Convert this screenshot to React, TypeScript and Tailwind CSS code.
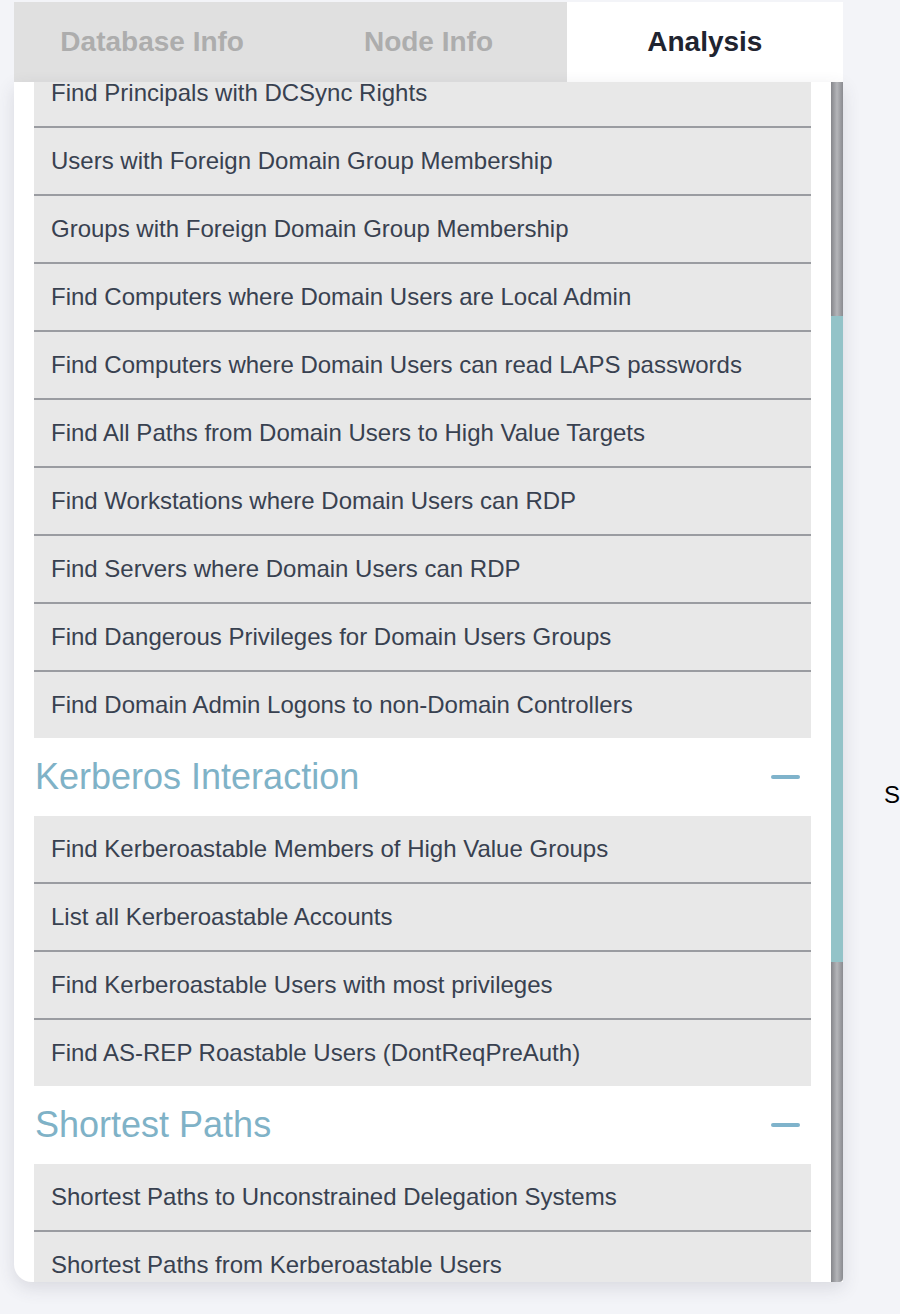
const groups = [
  {
    title: "",
    items: [
      "Find Principals with DCSync Rights",
      "Users with Foreign Domain Group Membership",
      "Groups with Foreign Domain Group Membership",
      "Find Computers where Domain Users are Local Admin",
      "Find Computers where Domain Users can read LAPS passwords",
      "Find All Paths from Domain Users to High Value Targets",
      "Find Workstations where Domain Users can RDP",
      "Find Servers where Domain Users can RDP",
      "Find Dangerous Privileges for Domain Users Groups",
      "Find Domain Admin Logons to non-Domain Controllers",
    ],
  },
  {
    title: "Kerberos Interaction",
    items: [
      "Find Kerberoastable Members of High Value Groups",
      "List all Kerberoastable Accounts",
      "Find Kerberoastable Users with most privileges",
      "Find AS-REP Roastable Users (DontReqPreAuth)",
    ],
  },
  {
    title: "Shortest Paths",
    items: [
      "Shortest Paths to Unconstrained Delegation Systems",
      "Shortest Paths from Kerberoastable Users",
      "Shortest Paths to Domain Admins from Kerberoastable Users",
    ],
  },
];

const tabs = ["Database Info", "Node Info", "Analysis"];

export default function App() {
  return (
    <div
      className="w-[900px] h-[1314px] bg-[#f3f4f8] overflow-hidden flex"
      style={{ fontFamily: '"Liberation Sans", Arial, sans-serif' }}
    >
      <div className="ml-[14px] mt-[2px] w-[830px] flex flex-col">
        {/* tabs */}
        <div className="grid grid-cols-3 h-[80px]">
          {tabs.map((tab) => (
            <div
              key={tab}
              className={`flex items-center justify-center text-[28px] font-bold ${
                tab === "Analysis"
                  ? "bg-white text-[#1f2430]"
                  : "bg-[#e0e0e0] text-[#adadad]"
              }`}
            >
              {tab}
            </div>
          ))}
        </div>

        {/* panel */}
        <div className="h-[1200px] flex bg-white rounded-bl-[18px] shadow-[0_6px_18px_rgba(60,60,80,0.14)]">
          <div className="flex-1 overflow-hidden rounded-bl-[18px]">
            <div className="-mt-[22px] px-[20px]">
              {groups.map((group, gi) => (
                <div key={gi}>
                  {group.title && (
                    <div className="h-[78px] flex items-center justify-between">
                      <span className="text-[36px] text-[#7fb2c7] pl-[1px]">
                        {group.title}
                      </span>
                      <span className="w-[29px] h-[4px] rounded-full bg-[#7fb3cb] mr-[11px]"></span>
                    </div>
                  )}
                  {group.items.map((item, i) => (
                    <div
                      key={item}
                      className={`flex items-center pl-[17px] bg-[#e8e8e8] text-[24px] text-[#384150] ${
                        i < group.items.length - 1
                          ? "h-[68px] border-b-2 border-[#9a9ca1]"
                          : "h-[66px]"
                      }`}
                    >
                      {item}
                    </div>
                  ))}
                </div>
              ))}
            </div>
          </div>

          {/* scrollbar */}
          <div className="w-[12px] flex flex-col bg-gradient-to-r from-[#85868b] via-[#b4b5b9] to-[#8a8b90] rounded-br-[4px]">
            <div className="h-[234px]"></div>
            <div className="h-[646px] bg-[#93c3c8]"></div>
          </div>
        </div>
      </div>

      <div className="ml-[41px] mt-[777px] text-[24px] text-black">S</div>
    </div>
  );
}
